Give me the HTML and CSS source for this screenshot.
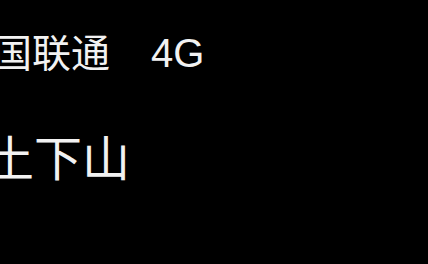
FILE: index.html
```html
<!DOCTYPE html>
<html lang="zh-CN">
<head>
<meta charset="utf-8">
<link rel="stylesheet" href="styles.css">
</head>
<body>
<div class="screen">
  <div class="status">
    <span class="carrier">中国联通</span><span class="network">4G</span>
  </div>
  <div class="title">土下山</div>
</div>
</body>
</html>
```
FILE: styles.css
```css
html, body {
  margin: 0;
  padding: 0;
  background: #000;
}
.screen {
  width: 428px;
  height: 264px;
  overflow: hidden;
  background: #000;
  color: #f2f2f2;
  font-family: "Liberation Sans", "Noto Sans CJK SC", sans-serif;
  display: flex;
  flex-direction: column;
}
.status {
  margin-top: 34px;
  margin-left: -46px;
  font-size: 39px;
  line-height: 39px;
  white-space: nowrap;
  display: flex;
  align-items: baseline;
}
.network {
  margin-left: 41px;
  font-size: 40px;
}
.title {
  margin-top: 63px;
  margin-left: -14px;
  font-size: 48px;
  line-height: 48px;
  white-space: nowrap;
}
```
